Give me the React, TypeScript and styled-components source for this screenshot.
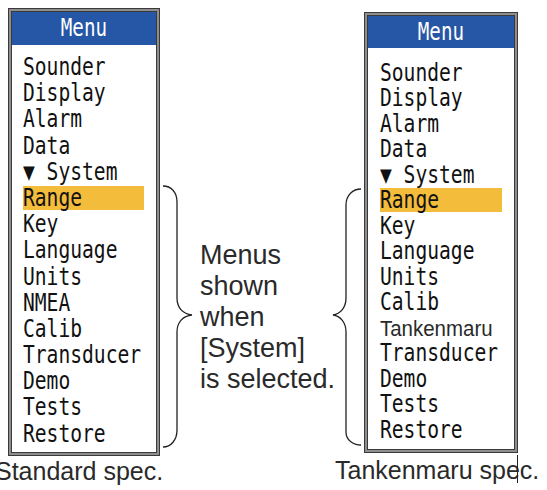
import React from 'react';
import styled, { createGlobalStyle } from 'styled-components';

const Global = createGlobalStyle`
  html, body { margin: 0; padding: 0; background: #ffffff; }
`;

const Page = styled.div`
  width: 547px;
  height: 490px;
  box-sizing: border-box;
  padding: 8px 0 0 8px;
  display: flex;
  flex-direction: row;
  align-items: flex-start;
  overflow: hidden;
  background: #ffffff;
`;

const Column = styled.div<{ $top: number; $width: number }>`
  position: relative;
  flex-shrink: 0;
  width: ${(p) => p.$width}px;
  margin-top: ${(p) => p.$top}px;
  display: flex;
  flex-direction: column;
`;

const Panel = styled.div<{ $height: number }>`
  box-sizing: border-box;
  width: 100%;
  height: ${(p) => p.$height}px;
  border: 1px solid #3a3a3a;
  padding: 3px;
  box-shadow: inset 0 0 0 2px #8e8e8e, inset 0 0 0 3px #3a3a3a;
  background: #ffffff;
  display: flex;
  flex-direction: column;
`;

const Header = styled.div<{ $height: number }>`
  height: ${(p) => p.$height}px;
  line-height: ${(p) => p.$height}px;
  background: #2557a6;
  color: #ffffff;
  text-align: center;
  font-family: "DejaVu Sans Mono", monospace;
  font-size: 24px;
  flex-shrink: 0;
`;

const HeaderLabel = styled.span`
  display: inline-block;
  transform: scaleX(0.8);
  transform-origin: center;
`;

const List = styled.div<{ $padTop: number; $gap: number; $padLeft: number; $padRight: number }>`
  display: flex;
  flex-direction: column;
  gap: ${(p) => p.$gap}px;
  padding: ${(p) => p.$padTop}px ${(p) => p.$padRight}px 0 ${(p) => p.$padLeft}px;
`;

const Row = styled.div<{ $active?: boolean }>`
  height: 24px;
  line-height: 24px;
  background: ${(p) => (p.$active ? '#f4bc3b' : 'transparent')};
  color: #111111;
  font-family: "DejaVu Sans Mono", monospace;
  font-size: 24px;
  white-space: pre;
  overflow: visible;
`;

const Label = styled.span<{ $plain?: boolean }>`
  display: inline-block;
  transform-origin: left center;
  transform: scaleX(${(p) => (p.$plain ? 0.93 : 0.817)});
  ${(p) =>
    p.$plain
      ? `font-family: "Liberation Sans", Arial, sans-serif; font-size: 22px; line-height: 24px; color: #2a2a2a;`
      : ''}
`;

const Caption = styled.div<{ $shift: number; $top: number }>`
  margin-left: ${(p) => p.$shift}px;
  margin-top: ${(p) => p.$top}px;
  white-space: nowrap;
  font-family: "Liberation Sans", Arial, sans-serif;
  font-size: 25px;
  line-height: 29px;
  color: #2a2a2a;
`;

const Tick = styled.div`
  position: absolute;
  left: 153px;
  top: 443px;
  width: 1px;
  height: 28px;
  background: #222222;
`;

const BraceSvg = styled.svg<{ $top: number }>`
  flex-shrink: 0;
  margin-top: ${(p) => p.$top}px;
  overflow: visible;
`;

const Description = styled.div`
  flex-shrink: 0;
  width: 131px;
  margin: 232px 0 0 4px;
  white-space: nowrap;
  font-family: "Liberation Sans", Arial, sans-serif;
  font-size: 27px;
  line-height: 31px;
  color: #2a2a2a;
`;

type Item = { text: string; active?: boolean; plain?: boolean };

const leftItems: Item[] = [
  { text: 'Sounder' },
  { text: 'Display' },
  { text: 'Alarm' },
  { text: 'Data' },
  { text: '▼ System' },
  { text: 'Range', active: true },
  { text: 'Key' },
  { text: 'Language' },
  { text: 'Units' },
  { text: 'NMEA' },
  { text: 'Calib' },
  { text: 'Transducer' },
  { text: 'Demo' },
  { text: 'Tests' },
  { text: 'Restore' },
];

const rightItems: Item[] = [
  { text: 'Sounder' },
  { text: 'Display' },
  { text: 'Alarm' },
  { text: 'Data' },
  { text: '▼ System' },
  { text: 'Range', active: true },
  { text: 'Key' },
  { text: 'Language' },
  { text: 'Units' },
  { text: 'Calib' },
  { text: 'Tankenmaru', plain: true },
  { text: 'Transducer' },
  { text: 'Demo' },
  { text: 'Tests' },
  { text: 'Restore' },
];

type MenuProps = {
  items: Item[];
  height: number;
  headerHeight: number;
  padTop: number;
  gap: number;
  padLeft: number;
  padRight: number;
};

const MenuPanel = ({ items, height, headerHeight, padTop, gap, padLeft, padRight }: MenuProps) => (
  <Panel $height={height}>
    <Header $height={headerHeight}>
      <HeaderLabel>Menu</HeaderLabel>
    </Header>
    <List $padTop={padTop} $gap={gap} $padLeft={padLeft} $padRight={padRight}>
      {items.map((it) => (
        <Row key={it.text} $active={it.active}>
          <Label $plain={it.plain}>{it.text}</Label>
        </Row>
      ))}
    </List>
  </Panel>
);

export default function App() {
  return (
    <>
      <Global />
      <Page>
        <Column $top={0} $width={152}>
          <MenuPanel items={leftItems} height={448} headerHeight={33} padTop={10} gap={2.2} padLeft={11} padRight={12} />
          <Caption $shift={-13} $top={1}>Standard spec.</Caption>
        </Column>

        <BraceSvg $top={172} width={36} height={275} viewBox="0 0 36 275">
          <path
            d="M3,6 C11,6 17,12 17,22 L17,118 C17,128 23,134 32,135 C23,136 17,142 17,152 L17,250 C17,260 11,267 3,267"
            fill="none"
            stroke="#222"
            strokeWidth={1.3}
          />
        </BraceSvg>

        <Description>
          Menus
          <br />
          shown
          <br />
          when
          <br />
          [System]
          <br />
          is selected.
        </Description>

        <BraceSvg $top={172} width={33} height={275} viewBox="0 0 33 275">
          <path
            d="M30,9 C22,9 15,15 15,25 L15,118 C15,128 9,134 2,135 C9,136 15,142 15,152 L15,252 C15,260 22,265 30,265"
            fill="none"
            stroke="#222"
            strokeWidth={1.3}
          />
        </BraceSvg>

        <Column $top={4} $width={154}>
          <MenuPanel items={rightItems} height={441} headerHeight={32} padTop={12.5} gap={1.5} padLeft={12} padRight={12} />
          <Caption $shift={-29} $top={3}>Tankenmaru spec.</Caption>
          <Tick />
        </Column>
      </Page>
    </>
  );
}
